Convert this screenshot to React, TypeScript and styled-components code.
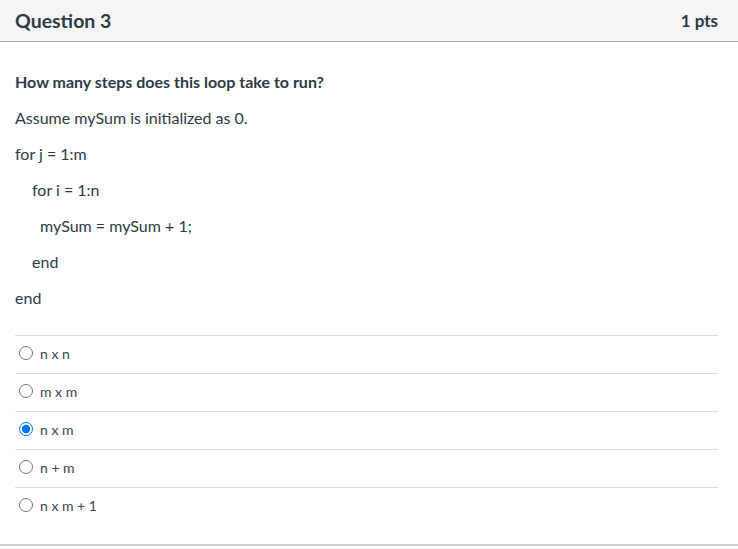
import styled, { createGlobalStyle } from "styled-components";

const Global = createGlobalStyle`
  body {
    margin: 0;
    background: #fff;
    font-family: Lato, "Liberation Sans", sans-serif;
    color: #2d3b45;
  }
`;

const Card = styled.div`
  width: 738px;
  border-bottom: 2px solid #c7cdd1;
  box-sizing: border-box;
`;

const Header = styled.div`
  height: 41px;
  background: #f5f5f5;
  border-bottom: 1px solid #adb4b9;
  display: flex;
  align-items: center;
  justify-content: space-between;
  padding: 0 20px 0 15px;
`;

const Title = styled.h2`
  margin: 0;
  font-size: 19.5px;
  font-weight: 700;
  color: #2d3b45;
`;

const Points = styled.div`
  font-size: 17px;
  font-weight: 700;
  color: #2d3b45;
`;

const Body = styled.div`
  padding: 14px 20px 19px 15px;
`;

const Text = styled.p<{ $indent?: number; $bold?: boolean }>`
  margin: 15px 0;
  padding-left: ${(p) => p.$indent ?? 0}px;
  font-size: 16px;
  line-height: 21px;
  font-weight: ${(p) => (p.$bold ? 700 : 400)};
`;

const Answers = styled.div`
  margin-top: 27px;
`;

const Answer = styled.label`
  display: flex;
  align-items: center;
  height: 37px;
  box-sizing: border-box;
  padding: 0 0 3px 4px;
  border-top: 1px solid #dcdfe1;
  height: 38px;
  font-size: 14px;
  color: #3b4650;
`;

const Radio = styled.input`
  margin: 0 7px 0 0;
  width: 14px;
  height: 14px;
`;

const lines: [string, number, boolean?][] = [
  ["How many steps does this loop take to run?", 0, true],
  ["Assume mySum is initialized as 0.", 0],
  ["for j = 1:m", 0],
  ["for i = 1:n", 17],
  ["mySum = mySum + 1;", 25],
  ["end", 17],
  ["end", 0],
];

const options = ["n x n", "m x m", "n x m", "n + m", "n x m + 1"];

export default function App() {
  return (
    <>
      <Global />
      <Card>
        <Header>
          <Title>Question 3</Title>
          <Points>1 pts</Points>
        </Header>
        <Body>
          {lines.map(([t, indent, bold], i) => (
            <Text key={i} $indent={indent} $bold={bold}>
              {t}
            </Text>
          ))}
          <Answers>
            {options.map((o, i) => (
              <Answer key={i}>
                <Radio type="radio" name="q3" defaultChecked={i === 2} />
                {o}
              </Answer>
            ))}
          </Answers>
        </Body>
      </Card>
    </>
  );
}
